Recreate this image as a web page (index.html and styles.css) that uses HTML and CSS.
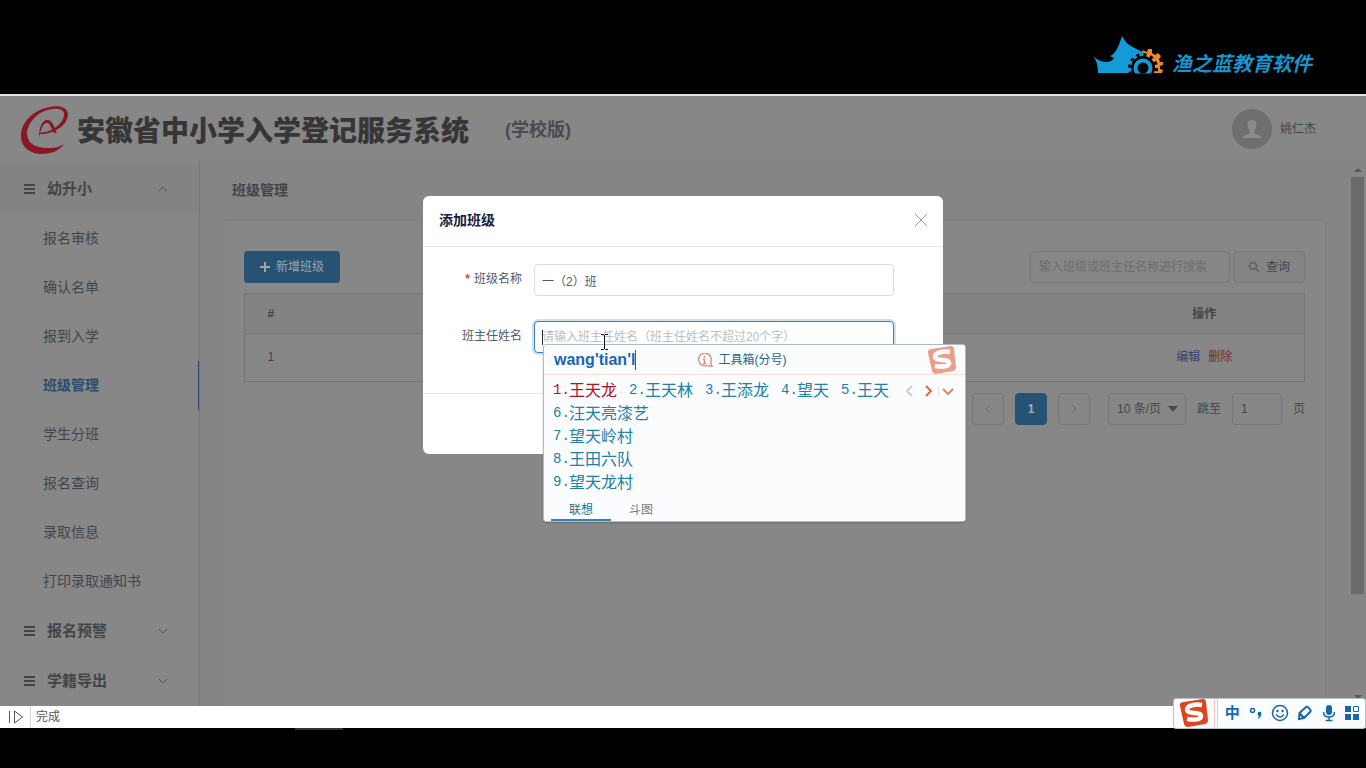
FILE: index.html
```html
<!DOCTYPE html>
<html lang="zh-CN">
<head>
<meta charset="utf-8">
<title>安徽省中小学入学登记服务系统</title>
<link rel="stylesheet" href="styles.css">
</head>
<body>
<div class="band">
  <svg class="brand-mark" width="72" height="40" viewBox="0 0 72 40">
    <path d="M50 14l5 2 1-3 4 0 0 4 3 2 3-2 3 3-2 3 1 3 3 0 0 3-3 1 0 3 3 1-1 3H56z" fill="#ee8a25"/>
    <path d="M0 19C4 23 9 26 14 26C18 26 21 24 22 22L18 20C24 18 27 9 30 0C33 5 35 8 39 10C46 14 53 16 57 22V37H6C6 29 4 23 0 19Z" fill="#129bd6"/>
    <circle cx="51" cy="32" r="13" fill="none" stroke="#000" stroke-width="4" stroke-dasharray="3 3.800"/>
    <circle cx="51" cy="32" r="12" fill="#000"/>
    <circle cx="51" cy="32" r="7.500" fill="none" stroke="#129bd6" stroke-width="4"/>
    <path d="M34 37.500h36V40H34z" fill="#000"/>
  </svg>
  <span class="brand-name">渔之蓝教育软件</span>
</div>

<div class="app">
  <header class="header">
    <svg class="logo" width="48" height="48" viewBox="0 0 48 48">
      <path d="M18 28C30 29 46 21 47 9C47 1 38-1 29 1C12 4 0 16 0 30C0 41 8 47 19 48C30 48 38 45 43 38C37 42 33 42 27 42C14 42 6 37 6 27C7 15 19 4 32 3C40 2 44 5 43 10C41 19 31 26 18 27Z" fill="#8a1824"/>
      <path d="M18 32C18 22 21 14 26 14C32 14 33 21 36 27H33C30 22 29 17 26 17C22 17 20 23 18 32Z" fill="#8a1824"/>
    </svg>
    <h1 class="title">安徽省中小学入学登记服务系统</h1>
    <span class="edition">(学校版)</span>
    <div class="user">
      <svg width="40" height="40" viewBox="0 0 40 40"><circle cx="20" cy="20" r="20" fill="#6f6f6f"/><path d="M20 11c4 0 5 3 4 7-1 3-2 4-2 6 2 2 7 2 8 5H10c1-3 6-3 8-5 0-2-1-3-2-6-1-4 0-7 4-7z" fill="#8c8c8c"/></svg>
      <span>姚仁杰</span>
    </div>
  </header>

  <div class="body">
    <nav class="sidebar">
      <button class="group open"><svg class="bars" width="12" height="10" viewBox="0 0 12 10"><path d="M1 1h11M1 5h11M1 9h11"/></svg><span>幼升小</span><svg class="chev" width="10" height="6" viewBox="0 0 10 6"><path d="M1 5l4-4 4 4"/></svg></button>
      <a class="item" href="#">报名审核</a>
      <a class="item" href="#">确认名单</a>
      <a class="item" href="#">报到入学</a>
      <a class="item active" href="#">班级管理</a>
      <a class="item" href="#">学生分班</a>
      <a class="item" href="#">报名查询</a>
      <a class="item" href="#">录取信息</a>
      <a class="item" href="#">打印录取通知书</a>
      <button class="group"><svg class="bars" width="12" height="10" viewBox="0 0 12 10"><path d="M1 1h11M1 5h11M1 9h11"/></svg><span>报名预警</span><svg class="chev" width="10" height="6" viewBox="0 0 10 6"><path d="M1 1l4 4 4-4"/></svg></button>
      <button class="group"><svg class="bars" width="12" height="10" viewBox="0 0 12 10"><path d="M1 1h11M1 5h11M1 9h11"/></svg><span>学籍导出</span><svg class="chev" width="10" height="6" viewBox="0 0 10 6"><path d="M1 1l4 4 4-4"/></svg></button>
    </nav>

    <main class="main">
      <h2 class="crumb">班级管理</h2>
      <section class="card">
        <div class="toolbar">
          <button class="primary"><svg width="10" height="10" viewBox="0 0 10 10"><path d="M5 0v10M0 5h10" stroke="currentColor" stroke-width="2"/></svg>新增班级</button>
          <div class="search">
            <input class="box query" type="text" aria-label="搜索" placeholder="输入班级或班主任名称进行搜索">
            <button class="box find"><svg width="12" height="12" viewBox="0 0 12 12"><circle cx="5" cy="5" r="3.5"/><path d="M7.5 7.5L11 11"/></svg>查询</button>
          </div>
        </div>
        <table class="table">
          <thead><tr><th class="num">#</th><th></th><th class="ops">操作</th></tr></thead>
          <tbody><tr><td>1</td><td></td><td><a class="edit" href="#">编辑</a><a class="del" href="#">删除</a></td></tr></tbody>
        </table>
        <div class="pager">
          <button class="box page" aria-label="上一页"><svg width="6" height="10" viewBox="0 0 6 10"><path d="M5 1L1 5l4 4"/></svg></button>
          <button class="box page current">1</button>
          <button class="box page" aria-label="下一页"><svg width="6" height="10" viewBox="0 0 6 10"><path d="M1 1l4 4-4 4"/></svg></button>
          <div class="size"><select class="box" aria-label="每页条数"><option>10 条/页</option></select><svg width="10" height="6" viewBox="0 0 10 6"><path d="M0 0h10L5 6z"/></svg></div>
          <label for="jump">跳至</label>
          <input class="box jump" id="jump" type="text" value="1">
          <span>页</span>
        </div>
      </section>
    </main>
    <div class="scroll">
      <svg width="8" height="4" viewBox="0 0 8 4"><path d="M0 4h8L4 0z"/></svg>
      <div class="thumb"></div>
      <div class="rest"></div>
      <svg width="8" height="4" viewBox="0 0 8 4"><path d="M0 0h8L4 4z"/></svg>
    </div>
  </div>

  <div class="overlay">
    <div class="dialog" role="dialog" aria-labelledby="dlg">
      <div class="dialog-head">
        <h3 id="dlg">添加班级</h3>
        <button class="close" aria-label="关闭"><svg width="12" height="12" viewBox="0 0 12 12"><path d="M0 0l12 12M12 0L0 12"/></svg></button>
      </div>
      <form class="form">
        <label for="cls"><b class="req">*</b>班级名称</label>
        <input class="text" id="cls" type="text" value="一（2）班">
        <label for="teacher">班主任姓名</label>
        <div class="field">
          <input class="text focused" id="teacher" type="text" placeholder="请输入班主任姓名（班主任姓名不超过20个字）">
          <i class="caret"></i>
          <div class="ime">
            <div class="ime-head">
              <span class="pinyin">wang'tian'l</span>
              <span class="tools"><svg width="16" height="14" viewBox="0 0 16 14"><path d="M11 12A6.300 6.300 0 1 1 13.500 9.500L15 13H11M7.500 6v4.500M6 6.500h1.500M6 10.500h3" fill="none" stroke="#de8a6e" stroke-width="1.300"/><circle cx="7.500" cy="3.800" r="1" fill="#de8a6e"/></svg>工具箱(分号)</span>
              <svg class="ime-logo" width="30" height="30" viewBox="0 0 30 30"><path d="M4 4Q13 3 23 1Q26 0 27 4L29 22Q29 25 26 26L9 29Q6 29 5 26L1 8Q0 5 4 4Z" fill="#eb9f8a"/><path d="M23 7C17 6 8 7 8 12C9 17 22 13 22 18C22 22 15 22 8 21" fill="none" stroke="#fff" stroke-width="4.500"/></svg>
            </div>
            <ol class="row">
              <li class="first"><b>1.</b>王天龙</li><li><b>2.</b>王天林</li><li><b>3.</b>王添龙</li><li><b>4.</b>望天</li><li><b>5.</b>王天</li>
            </ol>
            <svg class="arrows" width="52" height="14" viewBox="0 0 52 14"><path d="M8 2L3 7l5 5" stroke="#cfcfcf"/><path d="M22 2l5 5-5 5" stroke="#d9694c"/><path d="M34.500 2v10" stroke="#f0ddd8" stroke-width="1"/><path d="M39 5l5 5 5-5" stroke="#e0866d"/></svg>
            <ol class="list"><li><b>6.</b>汪天亮漆艺</li><li><b>7.</b>望天岭村</li><li><b>8.</b>王田六队</li><li><b>9.</b>望天龙村</li></ol>
            <div class="tabs"><button type="button" class="on">联想</button><button type="button">斗图</button></div>
          </div>
          <svg class="ibeam" width="9" height="16" viewBox="0 0 9 16"><path d="M1 .5h2.500l1 1 1-1H8M4.500 1v14M1 15.500h2.500l1-1 1 1H8" fill="none" stroke="#111"/></svg>
        </div>
      </form>
      <div class="dialog-foot"></div>
    </div>
  </div>
</div>

<footer class="status">
  <svg width="31" height="22" viewBox="0 0 31 22"><path d="M9.500 5v12M14.500 5v12l8-6z" fill="none" stroke="#555"/><path d="M30.500 0v22" stroke="#d4d4d4"/></svg>
  <span>完成</span>
</footer>
<div class="bottom"><i></i></div>

<div class="imebar">
  <svg class="sogou" width="32" height="30" viewBox="0 0 30 30"><path d="M4 4Q13 3 23 1Q26 0 27 4L29 22Q29 25 26 26L9 29Q6 29 5 26L1 8Q0 5 4 4Z" fill="#e0431d"/><path d="M23 7C17 6 8 7 8 12C9 17 22 13 22 18C22 22 15 22 8 21" fill="none" stroke="#fff" stroke-width="4.500"/></svg>
  <svg class="seam" width="5" height="28" viewBox="0 0 5 28"><path d="M.5 0v28M3.500 0v28" stroke="#f2c4bb"/></svg>
  <b>中</b>
  <svg width="16" height="16" viewBox="0 0 16 16"><circle cx="4.500" cy="5.500" r="2" fill="none" stroke="#1467ad" stroke-width="1.500"/><path d="M9.500 8.500a2 2 0 1 1 3.500 1.500q-.5 3.500-3.500 4q1.500-1.500 1.200-3Q9.500 10 9.500 8.500z" fill="#1467ad"/></svg>
  <svg width="18" height="18" viewBox="0 0 18 18"><circle cx="9" cy="9" r="7.500" fill="none" stroke="#1467ad" stroke-width="1.500"/><circle cx="6.500" cy="7" r="1.200" fill="#1467ad"/><circle cx="11.500" cy="7" r="1.200" fill="#1467ad"/><path d="M5 10.500q4 5 8 0" fill="none" stroke="#1467ad" stroke-width="1.300"/></svg>
  <svg width="16" height="16" viewBox="0 0 16 16"><path d="M2 14L2.500 8L9 2Q11 1 13.500 5Q14 6 13 7L7 13ZM2.500 8L7 13" fill="none" stroke="#1467ad" stroke-width="2"/></svg>
  <svg width="16" height="18" viewBox="0 0 16 18"><rect x="5" y="1" width="6" height="10" rx="3" fill="#1467ad"/><path d="M2.500 8q0 5 5.500 5t5.500-5M8 13v3M4.500 16.500h7" fill="none" stroke="#1467ad" stroke-width="1.500"/></svg>
  <svg width="14" height="14" viewBox="0 0 14 14"><path d="M0 0h6v6H0zM0 8h6v6H0zM8 8h6v6H8z" fill="#1467ad"/><path d="M8.500.5h5v5h-5z" fill="none" stroke="#1467ad"/></svg>
</div>
</body>
</html>
```

FILE: styles.css
```css
* { box-sizing: border-box; }
body {
  margin: 0;
  min-height: 100vh;
  display: flex;
  flex-direction: column;
  position: relative;
  background: #000;
  color: #424548;
  font: 12px/20px "Liberation Sans", "Noto Sans CJK SC", sans-serif;
}
h1, h2, h3, ol { margin: 0; padding: 0; }
ol { list-style: none; }
a { text-decoration: none; color: inherit; }
button, input, select { font: inherit; color: inherit; margin: 0; }
button { cursor: pointer; }
svg { flex: none; display: block; }

.band {
  height: 96px;
  display: flex;
  justify-content: flex-end;
  align-items: flex-start;
  gap: 8px;
  padding: 36px 54px 0 0;
  border-bottom: 2px solid #e4e4e4;
}
.brand-name { padding-top: 16px; color: #1795cc; font-size: 20px; line-height: 24px; font-weight: 700; font-style: italic; }

.app { flex: 1; display: flex; flex-direction: column; position: relative; background: #858585; }
.header { height: 64px; display: flex; align-items: center; padding: 4px 50px 0 21px; background: #878787; }
.title { margin: 0 36px 0 8px; padding-top: 4px; font-size: 28px; line-height: 40px; font-weight: 900; color: #363636; }
.edition { font-size: 18px; line-height: 24px; font-weight: 700; color: #494b50; }
.user { margin-left: auto; padding-bottom: 2px; display: flex; align-items: center; gap: 8px; }

.body { flex: 1; display: flex; }
.sidebar { width: 200px; padding-top: 4px; display: flex; flex-direction: column; background: #878787; border-right: 1px solid #777; font-size: 14px; }
.group { height: 50px; display: flex; align-items: center; gap: 12px; padding: 0 31px 0 23px; border: 0; background: none; font-size: 15px; font-weight: 700; text-align: left; }
.group.open { background: #838383; }
.group span { flex: 1; }
.bars path { fill: none; stroke: #424548; stroke-width: 2; }
.chev path { fill: none; stroke: #4b4e52; }
.item { height: 49px; padding-left: 43px; line-height: 48px; }
.item.active { color: #2c4c6e; font-weight: 700; border-right: 1px solid #28486b; }

.main { flex: 1; padding: 20px 24px 0; display: flex; flex-direction: column; gap: 20px; }
.crumb { padding-left: 8px; font-size: 14px; line-height: 20px; }
.card { flex: 1; padding: 30px 20px 0 20px; background: #878787; border: 0 solid #808080; border-top-width: 1px; border-right-width: 1px; border-radius: 4px; }
.toolbar { display: flex; justify-content: space-between; margin-bottom: 10px; }
.primary { height: 32px; width: 96px; display: flex; align-items: center; justify-content: center; gap: 6px; padding: 0; border: 0; border-radius: 4px; background: #285273; color: #9ba4ac; }
.search { display: flex; gap: 3px; }
.box { height: 32px; border: 1px solid #777; border-radius: 4px; background: #878787; padding: 0 8px; }
.query { width: 200px; }
.query::placeholder { color: #6b6d70; opacity: 1; }
.find { width: 72px; display: flex; align-items: center; justify-content: center; gap: 6px; background: #848484; }
.find path, .find circle { fill: none; stroke: #4b4e52; }
.table { width: 100%; border-collapse: collapse; border: 1px solid #757575; text-align: center; table-layout: fixed; }
.table th { height: 40px; padding: 0; background: #838383; border-bottom: 1px solid #757575; }
.table td { height: 48px; padding: 0 0 2px; }
.num { width: 52px; }
.ops { width: 200px; }
.edit { color: #36416d; margin-right: 8px; }
.del { color: #78282f; }
.pager { display: flex; justify-content: flex-end; align-items: center; gap: 11px; margin-top: 11px; }
.page { width: 32px; padding: 0; display: flex; align-items: center; justify-content: center; }
.page path { fill: none; stroke: #6a6a6a; }
.page.current { background: #285273; border-color: #285273; color: #a4adb5; font-weight: 700; }
.size { display: flex; align-items: center; position: relative; margin-left: 7px; }
.size select { width: 78px; appearance: none; }
.size svg { position: absolute; right: 8px; fill: #484b4e; pointer-events: none; }
.jump { width: 50px; }

.scroll { width: 16px; display: flex; flex-direction: column; align-items: center; padding: 8px 1px 7px 0; background: #858585; }
.scroll svg { fill: #565656; }
.thumb { width: 13px; margin-top: 5px; flex: 417; background: #6b6b6b; }
.rest { flex: 101; }

.overlay { position: absolute; inset: 0; display: flex; justify-content: center; align-items: flex-start; padding-top: 100px; }
.dialog { width: 520px; background: #fff; border-radius: 6px; }
.dialog-head { height: 51px; display: flex; align-items: center; justify-content: space-between; padding: 0 16px 2px; border-bottom: 1px solid #e6e8ea; }
.dialog-head h3 { font-size: 14px; line-height: 20px; color: #17233d; }
.close { border: 0; padding: 0; background: none; }
.close path { fill: none; stroke: #999; }
.form { display: grid; grid-template-columns: 83px 360px; column-gap: 12px; row-gap: 25px; padding: 17px 16px 40px; align-items: center; color: #515a6e; }
.form label { text-align: right; padding-bottom: 2px; }
.req { color: #d24a35; margin-right: 4px; }
.text { display: block; width: 100%; height: 32px; padding: 0 7px; border: 1px solid #dcdee2; border-radius: 4px; background: #fff; outline: 0; }
.text::placeholder { color: #bbbec4; opacity: 1; }
.focused { border-color: #3f7fae; box-shadow: 0 0 0 2px #cfe2f2; }
.dialog-foot { height: 61px; border-top: 1px solid #e6e8ea; }
.field { position: relative; }
.caret { position: absolute; left: 8px; top: 9px; width: 1px; height: 15px; background: #222; }
.ibeam { position: absolute; left: 66px; top: 13px; }

.ime { position: absolute; left: 9px; top: 23px; width: 423px; background: #fbfcfd; border: 1px solid #a9bdc9; border-radius: 3px; color: #2180a6; box-shadow: 0 1px 2px #0003; }
.ime-head { height: 30px; display: flex; align-items: center; padding: 0 8px 0 10px; border-bottom: 1px solid #f6ddd2; }
.pinyin { font-size: 16px; font-weight: 700; color: #1a66b3; border-right: 1px solid #b8303c; }
.tools { display: flex; align-items: center; gap: 5px; margin-left: 61px; color: #1f6485; }
.ime-logo { margin-left: auto; }
.row { display: flex; gap: 12px; padding: 4px 0 0 9px; }
.ime li { display: flex; font-size: 16px; line-height: 23px; }
.ime li b { width: 16px; font-family: "Liberation Mono", monospace; font-size: 14px; font-weight: 400; }
.ime .first { color: #ae1427; }
.arrows { position: absolute; right: 9px; top: 39px; fill: none; stroke-width: 2; }
.list { padding-left: 9px; }
.tabs { display: flex; padding-left: 7px; }
.tabs button { width: 60px; height: 27px; padding: 6px 0 0; border: 0; border-bottom: 2px solid transparent; background: none; color: #777; }
.tabs .on { color: #1d6f96; border-color: #3382ad; }

.status { height: 22px; display: flex; align-items: center; gap: 5px; background: #fff; color: #555; }
.bottom { height: 40px; padding-left: 295px; }
.bottom i { display: block; width: 48px; height: 2px; background: #333; }

.imebar { position: absolute; right: 0; bottom: 39px; width: 193px; height: 31px; display: flex; align-items: center; justify-content: space-between; padding: 0 6px 2px 4px; background: #fbfcfd; border: 1px solid #b5c3cb; border-radius: 3px; color: #1467ad; }
.imebar b { font-size: 15px; margin-left: -4px; }
.seam { margin: 0 2px 0 -4px; }
```
